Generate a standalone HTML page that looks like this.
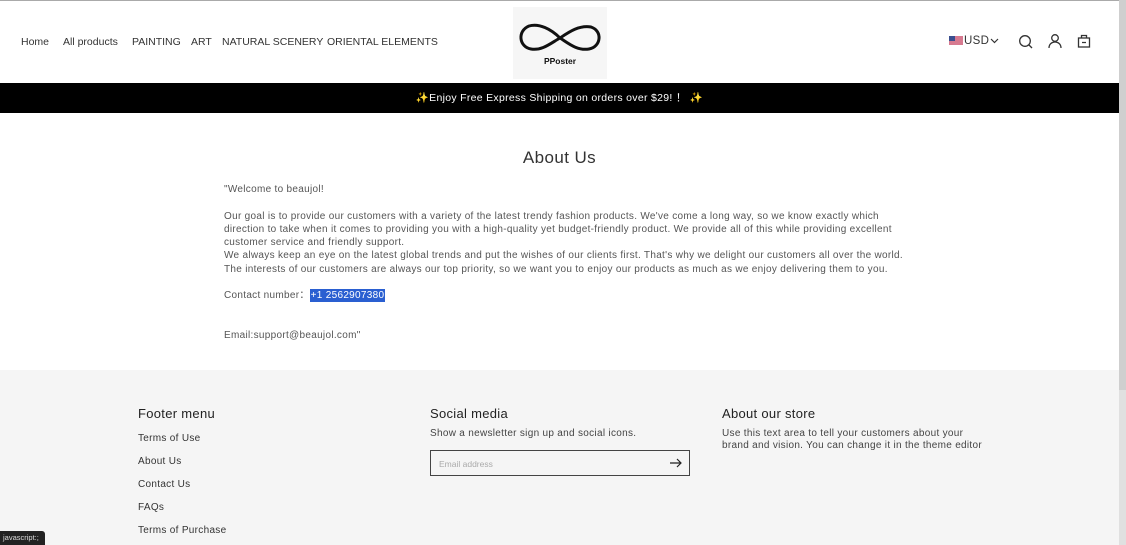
<!DOCTYPE html>
<html><head><meta charset="utf-8"><style>
*{margin:0;padding:0;box-sizing:border-box}
body{width:1126px;height:545px;overflow:hidden;font-family:"Liberation Sans",sans-serif;color:#333;background:#fff;position:relative}
.top{position:absolute;left:0;top:0;width:1126px;height:1px;background:#aaa}
.sb{position:absolute;right:0;top:0;width:7px;height:545px;background:#e0e0e0}
.sb2{position:absolute;right:0;top:0;width:7px;height:390px;background:#cfcfcf}
nav a{position:absolute;top:36px;font-size:10.5px;color:#333;text-decoration:none;white-space:nowrap}
.logo{position:absolute;left:513px;top:7px;width:94px;height:72px;background:#f6f6f6}
.bar{position:absolute;left:0;top:83px;width:1119px;height:30px;background:#000;color:#fff;font-size:10.5px;letter-spacing:0.3px;text-align:center;line-height:30px}
h1{position:absolute;left:0;width:1119px;top:148px;text-align:center;font-weight:normal;font-size:17px;letter-spacing:0.4px;color:#333}
.c{position:absolute;left:224px;top:183px;font-size:10px;letter-spacing:0.3px;line-height:13.3px;color:#555;width:700px;white-space:nowrap}
.sel{background:#2a5fd1;color:#fff;padding:1px 1px}
.foot{position:absolute;left:0;top:370px;width:1119px;height:175px;background:#f5f5f5}
.foot h3{position:absolute;top:36px;font-size:13px;letter-spacing:0.3px;font-weight:normal;color:#222}
.foot a{position:absolute;font-size:10px;letter-spacing:0.3px;color:#333}
.foot p{position:absolute;font-size:10px;letter-spacing:0.3px;color:#444;line-height:12px;white-space:nowrap}
.inp{position:absolute;left:430px;top:80px;width:260px;height:26px;border:1px solid #444;font-size:8.5px;color:#aaa;padding:8px 8px}
.tip{position:absolute;left:0;top:531px;width:45px;height:14px;background:#222;color:#ddd;font-size:7.5px;line-height:14px;padding-left:3px;border-radius:0 3px 0 0}
</style></head><body>
<div class="top"></div>
<nav>
<a style="left:21px">Home</a><a style="left:63px">All products</a><a style="left:132px">PAINTING</a><a style="left:191px">ART</a><a style="left:222px">NATURAL SCENERY</a><a style="left:327px">ORIENTAL ELEMENTS</a>
</nav>
<div class="logo"><svg width="94" height="72"><path d="M47 31 C38 22 26 16 16 19 C4 24 6 40 18 42 C29 44 38 36 47 31 C56 25 66 18 78 20 C90 24 88 40 76 42 C64 44 55 36 47 31Z" fill="none" stroke="#111" stroke-width="3"/><text x="47" y="57" font-size="8.5" font-weight="bold" text-anchor="middle" font-family="Liberation Sans" fill="#111">PPoster</text></svg></div>
<svg style="position:absolute;left:949px;top:36px" width="14" height="9"><rect width="14" height="9" fill="#d77a90"/><rect width="6" height="5" fill="#3b4f8f"/></svg>
<div style="position:absolute;left:964px;top:35px;font-size:11.5px;letter-spacing:0.3px;color:#333">USD</div>
<svg style="position:absolute;left:990px;top:38px" width="9" height="6"><path d="M1 1l3.5 3.5L8 1" fill="none" stroke="#333" stroke-width="1.2"/></svg>
<svg style="position:absolute;left:1018px;top:34px" width="16" height="16" fill="none" stroke="#333" stroke-width="1.3"><circle cx="7" cy="7" r="5.3"/><path d="M11 11l3 3"/></svg>
<svg style="position:absolute;left:1047px;top:33px" width="16" height="16" fill="none" stroke="#333" stroke-width="1.3"><circle cx="8" cy="5" r="3.3"/><path d="M2 15c0-4 3-6 6-6s6 2 6 6"/></svg>
<svg style="position:absolute;left:1076px;top:33px" width="16" height="16" fill="none" stroke="#333" stroke-width="1.3"><rect x="2.5" y="5" width="11" height="9"/><path d="M5.5 5V2.5h5V5M6 9.5h4"/></svg>
<div class="bar">✨Enjoy Free Express Shipping on orders over $29! ！ ✨</div>
<h1>About Us</h1>
<div class="c">"Welcome to beaujol!<br><br>Our goal is to provide our customers with a variety of the latest trendy fashion products. We've come a long way, so we know exactly which<br>direction to take when it comes to providing you with a high-quality yet budget-friendly product. We provide all of this while providing excellent<br>customer service and friendly support.<br>We always keep an eye on the latest global trends and put the wishes of our clients first. That's why we delight our customers all over the world.<br>The interests of our customers are always our top priority, so we want you to enjoy our products as much as we enjoy delivering them to you.<br><br>Contact number：<span class="sel">+1 2562907380</span><br><br><br>Email:support@beaujol.com"</div>
<div class="foot">
<h3 style="left:138px">Footer menu</h3>
<a style="left:138px;top:63px">Terms of Use</a><a style="left:138px;top:86px">About Us</a><a style="left:138px;top:109px">Contact Us</a><a style="left:138px;top:132px">FAQs</a><a style="left:138px;top:155px">Terms of Purchase</a>
<h3 style="left:430px">Social media</h3>
<p style="left:430px;top:58px">Show a newsletter sign up and social icons.</p>
<div class="inp">Email address</div>
<svg style="position:absolute;left:670px;top:88px" width="12" height="10" fill="none" stroke="#222" stroke-width="1.2"><path d="M0 5h11M7 1l4 4-4 4"/></svg>
<h3 style="left:722px">About our store</h3>
<p style="left:722px;top:58px">Use this text area to tell your customers about your<br>brand and vision. You can change it in the theme editor</p>
</div>
<div class="sb"></div><div class="sb2"></div>
<div class="tip">javascript:;</div>
</body></html>
